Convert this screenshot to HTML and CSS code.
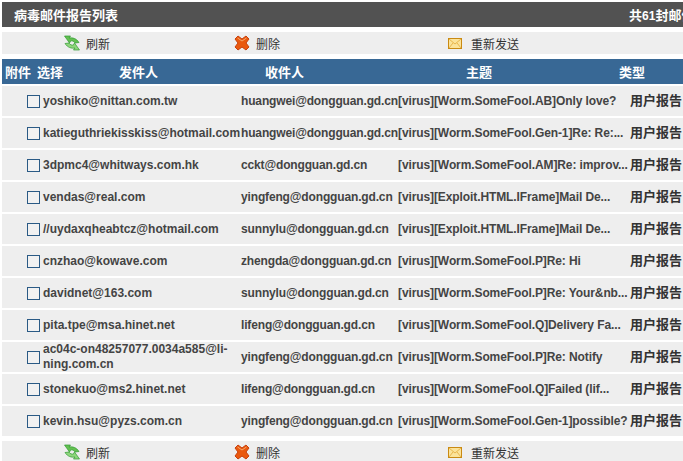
FILE: index.html
```html
<!DOCTYPE html>
<html lang="zh">
<head>
<meta charset="utf-8">
<title>病毒邮件报告列表</title>
<link rel="stylesheet" href="styles.css">
</head>
<body>
<svg class="defs" width="0" height="0" aria-hidden="true">
  <symbol id="i-refresh" viewBox="0 0 16 16">
    <path d="M0.5 1 H6.5 L5 3 C8.5 2.3 12.5 3.5 15 7.5 L11 8 C10 6.3 8.3 5.6 6.7 5.9 L5.5 8 Z" fill="#63c050" stroke="#2f9a30" stroke-width=".7" stroke-linejoin="round"/>
    <path d="M15.5 15 H9.5 L11 13 C7.5 13.7 3.5 12.5 1 8.5 L5 8 C6 9.7 7.7 10.4 9.3 10.1 L10.5 8 Z" fill="#8ed67c" stroke="#2f9a30" stroke-width=".7" stroke-linejoin="round"/>
  </symbol>
  <symbol id="i-delete" viewBox="0 0 16 16">
    <path d="M1 4 L4 1 L8 4 L12 1 L15 4 L12 8 L15 12 L12 15 L8 12 L4 15 L1 12 L4 8 Z" fill="#e9590f" stroke="#c8400c" stroke-width="1" stroke-linejoin="round"/>
    <path d="M3.5 3 L8 6 L12.5 3" fill="none" stroke="#f7a76a" stroke-width="1"/>
  </symbol>
  <symbol id="i-mail" viewBox="0 0 14 11">
    <rect x=".5" y=".5" width="13" height="10" fill="#fbe39a" stroke="#c98a12"/>
    <path d="M1 1 L7 6 L13 1 M1 10 L5 5 M13 10 L9 5" fill="none" stroke="#e8b64c" stroke-width="1"/>
  </symbol>
</svg>

<div class="page">
  <header class="titlebar">
    <span class="title">病毒邮件报告列表</span>
    <span class="count">共<b class="num">61</b>封邮件</span>
  </header>

  <nav class="toolbar">
    <a class="tool tool-refresh"><svg class="ico"><use href="#i-refresh"/></svg>刷新</a>
    <a class="tool tool-delete"><svg class="ico"><use href="#i-delete"/></svg>删除</a>
    <a class="tool tool-resend"><svg class="ico-mail"><use href="#i-mail"/></svg>重新发送</a>
  </nav>

  <div class="head">
    <span class="h-att">附件</span>
    <span class="h-sel">选择</span>
    <span class="h-from">发件人</span>
    <span class="h-to">收件人</span>
    <span class="h-subj">主题</span>
    <span class="h-type">类型</span>
  </div>

  <div class="rows">
    <div class="row"><span class="box"></span><span class="from">yoshiko@nittan.com.tw</span><span class="to">huangwei@dongguan.gd.cn</span><span class="subj">[virus][Worm.SomeFool.AB]Only love?</span><span class="type">用户报告</span></div>
    <div class="row"><span class="box"></span><span class="from">katieguthriekisskiss@hotmail.com</span><span class="to">huangwei@dongguan.gd.cn</span><span class="subj">[virus][Worm.SomeFool.Gen-1]Re: Re:...</span><span class="type">用户报告</span></div>
    <div class="row"><span class="box"></span><span class="from">3dpmc4@whitways.com.hk</span><span class="to">cckt@dongguan.gd.cn</span><span class="subj">[virus][Worm.SomeFool.AM]Re: improv...</span><span class="type">用户报告</span></div>
    <div class="row"><span class="box"></span><span class="from">vendas@real.com</span><span class="to">yingfeng@dongguan.gd.cn</span><span class="subj">[virus][Exploit.HTML.IFrame]Mail De...</span><span class="type">用户报告</span></div>
    <div class="row"><span class="box"></span><span class="from">//uydaxqheabtcz@hotmail.com</span><span class="to">sunnylu@dongguan.gd.cn</span><span class="subj">[virus][Exploit.HTML.IFrame]Mail De...</span><span class="type">用户报告</span></div>
    <div class="row"><span class="box"></span><span class="from">cnzhao@kowave.com</span><span class="to">zhengda@dongguan.gd.cn</span><span class="subj">[virus][Worm.SomeFool.P]Re: Hi</span><span class="type">用户报告</span></div>
    <div class="row"><span class="box"></span><span class="from">davidnet@163.com</span><span class="to">sunnylu@dongguan.gd.cn</span><span class="subj">[virus][Worm.SomeFool.P]Re: Your&amp;nb...</span><span class="type">用户报告</span></div>
    <div class="row"><span class="box"></span><span class="from">pita.tpe@msa.hinet.net</span><span class="to">lifeng@dongguan.gd.cn</span><span class="subj">[virus][Worm.SomeFool.Q]Delivery Fa...</span><span class="type">用户报告</span></div>
    <div class="row"><span class="box"></span><span class="from">ac04c-on48257077.0034a585@li-ning.com.cn</span><span class="to">yingfeng@dongguan.gd.cn</span><span class="subj">[virus][Worm.SomeFool.P]Re: Notify</span><span class="type">用户报告</span></div>
    <div class="row"><span class="box"></span><span class="from">stonekuo@ms2.hinet.net</span><span class="to">lifeng@dongguan.gd.cn</span><span class="subj">[virus][Worm.SomeFool.Q]Failed (lif...</span><span class="type">用户报告</span></div>
    <div class="row"><span class="box"></span><span class="from">kevin.hsu@pyzs.com.cn</span><span class="to">yingfeng@dongguan.gd.cn</span><span class="subj">[virus][Worm.SomeFool.Gen-1]possible?</span><span class="type">用户报告</span></div>
  </div>

  <nav class="toolbar toolbar-bottom">
    <a class="tool tool-refresh"><svg class="ico"><use href="#i-refresh"/></svg>刷新</a>
    <a class="tool tool-delete"><svg class="ico"><use href="#i-delete"/></svg>删除</a>
    <a class="tool tool-resend"><svg class="ico-mail"><use href="#i-mail"/></svg>重新发送</a>
  </nav>
</div>
</body>
</html>
```
FILE: styles.css
```css
html, body {
  margin: 0;
  height: 461px;
  overflow: hidden;
  background: #fff;
}
.defs { display: block; height: 0; }
.page {
  width: 720px;
  padding: 2px 0 0 2px;
  font-family: "Liberation Sans", "Noto Sans CJK SC", sans-serif;
  font-size: 12px;
  color: #444;
}
.titlebar {
  height: 25px;
  background: #525252;
  color: #fff;
  font-weight: bold;
  display: flex;
  align-items: center;
  padding-left: 12px;
  font-size: 13px;
}
.title { width: 615px; }
.num { font-weight: bold; font-size: 12px; }
.toolbar {
  height: 22px;
  margin-top: 5px;
  background: #eeeeee;
  display: flex;
  align-items: center;
  color: #333;
}
.toolbar-bottom { margin-top: 5px; }
.tool { display: flex; align-items: center; }
.tool-refresh { margin-left: 62px; width: 170px; }
.tool-delete { width: 213px; }
.ico { width: 16px; height: 16px; margin-right: 6px; }
.ico-mail { width: 14px; height: 11px; margin-right: 9px; margin-left: 1px; }

.head {
  height: 25px;
  margin-top: 5px;
  background: #386895;
  color: #fff;
  font-weight: bold;
  font-size: 13px;
  display: flex;
  align-items: center;
}
.h-att { margin-left: 3px; width: 32px; }
.h-sel { width: 82px; }
.h-from { width: 146px; }
.h-to { width: 201px; }
.h-subj { width: 153px; }

.rows {
  margin-top: 2px;
  display: flex;
  flex-direction: column;
  gap: 2px;
}
.row {
  height: 30px;
  background: #eeeeee;
  display: grid;
  grid-template-columns: 41px 198px 157px 232px auto;
  align-items: center;
  font-weight: bold;
}
.box {
  justify-self: end;
  width: 11px;
  height: 11px;
  margin: 1px 3px 0 0;
  background: #f1f1f1;
  border: 1px solid #2a5a85;
}
.from { overflow-wrap: anywhere; line-height: 15px; }
.to { white-space: nowrap; letter-spacing: -0.15px; }
.subj { white-space: nowrap; letter-spacing: -0.1px; }
.type { color: #333; font-size: 13px; padding-bottom: 4px; }
```
